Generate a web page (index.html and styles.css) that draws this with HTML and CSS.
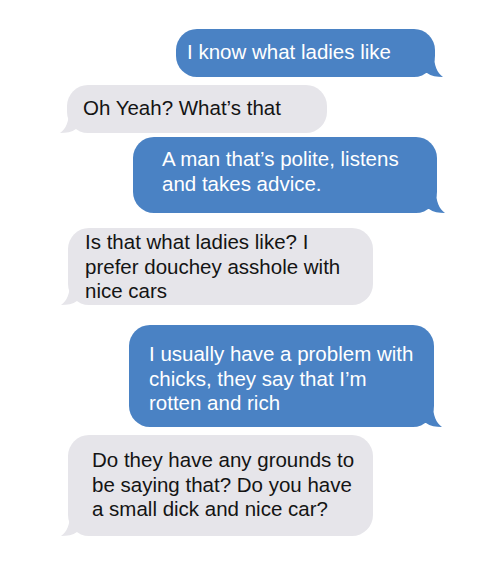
FILE: index.html
```html
<!DOCTYPE html>
<html>
<head>
    <title>Messages</title>
    <link rel="stylesheet" href="styles.css">
</head>
<body>
    <div class="thread">
        <div class="bubble sent b1">
            I know what ladies like
            <svg class="tail" width="20" height="22" viewBox="0 0 20 22"><path d="M0 0H11C11 10 14 18 20 22C14 22 8 21 4 18H0Z"/></svg>
        </div>
        <div class="bubble received b2">
            Oh Yeah? What’s that
            <svg class="tail" width="20" height="22" viewBox="0 0 20 22"><path d="M20 0H9C9 10 6 18 0 22C6 22 12 21 16 18H20Z"/></svg>
        </div>
        <div class="bubble sent b3">
            A man that’s polite, listens and takes advice.
            <svg class="tail" width="20" height="22" viewBox="0 0 20 22"><path d="M0 0H11C11 10 14 18 20 22C14 22 8 21 4 18H0Z"/></svg>
        </div>
        <div class="bubble received b4">
            Is that what ladies like? I prefer douchey asshole with nice cars
            <svg class="tail" width="20" height="22" viewBox="0 0 20 22"><path d="M20 0H9C9 10 6 18 0 22C6 22 12 21 16 18H20Z"/></svg>
        </div>
        <div class="bubble sent b5">
            I usually have a problem with chicks, they say that I’m rotten and rich
            <svg class="tail" width="20" height="22" viewBox="0 0 20 22"><path d="M0 0H11C11 10 14 18 20 22C14 22 8 21 4 18H0Z"/></svg>
        </div>
        <div class="bubble received b6">
            Do they have any grounds to be saying that? Do you have a small dick and nice car?
            <svg class="tail" width="20" height="22" viewBox="0 0 20 22"><path d="M20 0H9C9 10 6 18 0 22C6 22 12 21 16 18H20Z"/></svg>
        </div>
    </div>
</body>
</html>
```

FILE: styles.css
```css
body {
    margin: 0;
    background-color: #fff;
    font-family: "Liberation Sans", Arial, sans-serif;
}

.thread {
    display: flex;
    flex-direction: column;
    padding: 29px 64px 0 67px;
}

.bubble {
    position: relative;
    box-sizing: border-box;
    border-radius: 21px;
    font-size: 20.5px;
    line-height: 24.5px;
}

.bubble .tail {
    position: absolute;
    bottom: 0;
}

.sent {
    align-self: flex-end;
    background-color: #4a82c4;
    color: #fff;
}

.sent .tail {
    right: -8px;
    fill: #4a82c4;
}

.received {
    align-self: flex-start;
    background-color: #e6e5ea;
    color: #141414;
}

.received .tail {
    left: -7px;
    fill: #e6e5ea;
}

.b1 {
    width: 259px;
    height: 48px;
    padding: 11px 0 0 11px;
}

.b2 {
    margin-top: 8px;
    width: 260px;
    height: 48px;
    padding: 11px 0 0 16px;
}

.b3 {
    margin-top: 4px;
    margin-right: -2px;
    width: 304px;
    height: 76px;
    padding: 10px 20px 0 29px;
}

.b4 {
    margin-top: 15px;
    margin-left: 1px;
    width: 305px;
    height: 77px;
    padding: 2px 20px 0 17px;
}

.b5 {
    margin-top: 20px;
    margin-right: 1px;
    width: 305px;
    height: 102px;
    padding: 17px 12px 0 20px;
}

.b6 {
    margin-top: 8px;
    margin-left: 1px;
    width: 305px;
    height: 101px;
    padding: 13px 12px 0 24px;
}
```
